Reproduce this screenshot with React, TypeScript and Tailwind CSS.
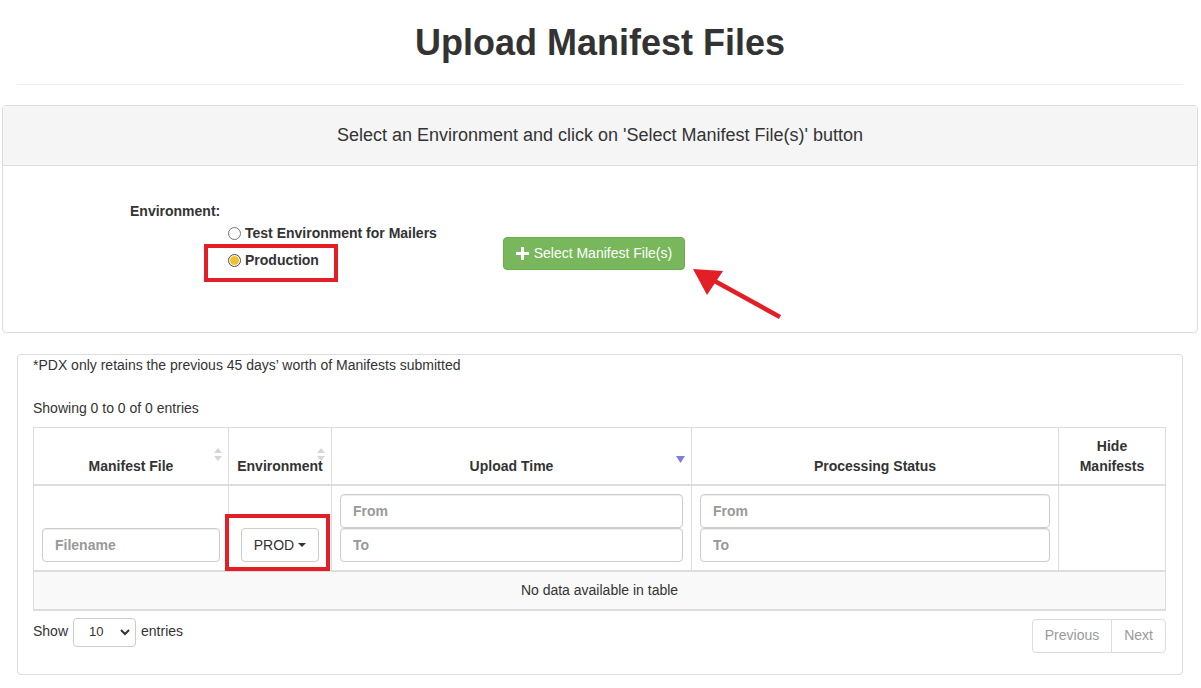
import React from 'react'

const font = { fontFamily: '"Liberation Sans", Arial, sans-serif' }

// small grey up/down sort indicator, like DataTables
function SortBoth() {
  return (
    <svg width="8" height="14" viewBox="0 0 8 14" className="absolute right-[6px] top-[20px]">
      <path d="M4 0 L8 5 L0 5 Z" fill="#d6d6d6" />
      <path d="M4 13 L8 8 L0 8 Z" fill="#d6d6d6" />
    </svg>
  )
}

function SortDesc() {
  return (
    <svg width="9" height="7" viewBox="0 0 9 7" className="absolute right-[6px] top-[28px]">
      <path d="M0 0 L9 0 L4.5 7 Z" fill="#7c7fd9" />
    </svg>
  )
}

function Radio({ checked }: { checked?: boolean }) {
  if (checked) {
    return (
      <span className="inline-flex w-[13px] h-[13px] rounded-full border-[1.5px] border-[#4a4a4a] items-center justify-center bg-white">
        <span className="w-[9px] h-[9px] rounded-full bg-[#f2c12e]" />
      </span>
    )
  }
  return <span className="inline-block w-[13px] h-[13px] rounded-full border border-[#767676] bg-white" />
}

function FilterInput({ placeholder }: { placeholder: string }) {
  return (
    <div className="h-[34px] w-full border border-[#ccc] rounded-[4px] bg-white px-3 flex items-center text-[14px] font-bold text-[#999] shadow-[inset_0_1px_1px_rgba(0,0,0,0.075)]">
      {placeholder}
    </div>
  )
}

export default function App() {
  return (
    <div className="bg-white min-h-[688px] text-[#333]" style={font}>
      {/* page title */}
      <div className="mx-[17px] w-[1166px] pt-[23px] pb-[21px] border-b border-[#eee]">
        <h1 className="text-center text-[36px] leading-[40px] font-bold text-[#333]">Upload Manifest Files</h1>
      </div>

      {/* environment panel */}
      <div className="mt-[20px] ml-[2px] w-[1196px] border border-[#ddd] rounded-[4px]">
        <div className="h-[60px] bg-[#f5f5f5] border-b border-[#ddd] flex items-center justify-center text-[18px] text-[#333]">
          Select an Environment and click on 'Select Manifest File(s)' button
        </div>
        <div className="relative h-[166px] pl-[127px] pt-[35px]">
          <div className="text-[14px] leading-[20px] font-bold">Environment:</div>
          <div className="flex">
            <div className="ml-[98px] mt-[2px] flex flex-col gap-[7px] text-[14px] leading-[20px] font-bold">
              <label className="flex items-center gap-[4px]">
                <Radio />
                <span>Test Environment for Mailers</span>
              </label>
              <label className="relative flex items-center gap-[4px]">
                <Radio checked />
                <span>Production</span>
                <span className="absolute left-[-24px] top-[-6px] w-[134px] h-[38px] border-[4px] border-[#e41e26]" />
              </label>
            </div>
            <div className="ml-[66px] mt-[16px]">
              <button className="h-[33px] w-[182px] rounded-[4px] bg-[#78b75b] border border-[#6aad4d] text-white text-[14px] flex items-center justify-center gap-[5px]">
                <svg width="13" height="13" viewBox="0 0 13 13">
                  <path d="M5 0 H8 V5 H13 V8 H8 V13 H5 V8 H0 V5 H5 Z" fill="#fff" />
                </svg>
                Select Manifest File(s)
              </button>
            </div>
          </div>
          {/* red arrow annotation */}
          <svg width="100" height="60" viewBox="0 0 100 60" className="absolute left-[686px] top-[99px]">
            <line x1="91" y1="52" x2="22" y2="14" stroke="#e41e26" strokeWidth="4.5" />
            <path d="M4 4 L34 6 L18 30 Z" fill="#e41e26" />
          </svg>
        </div>
      </div>

      {/* manifests panel */}
      <div className="mt-[21px] ml-[17px] w-[1166px] h-[321px] border border-[#ddd] rounded-[4px] px-[15px]">
        <div className="text-[14px] leading-[20px]">*PDX only retains the previous 45 days’ worth of Manifests submitted</div>
        <div className="mt-[23px] text-[14px] leading-[20px]">Showing 0 to 0 of 0 entries</div>

        <table className="mt-[9px] w-[1132px] border-collapse table-fixed text-[14px] leading-[20px]">
          <colgroup>
            <col className="w-[195px]" />
            <col className="w-[103px]" />
            <col className="w-[360px]" />
            <col className="w-[367px]" />
            <col className="w-[107px]" />
          </colgroup>
          <thead>
            <tr className="h-[57px]">
              <th className="relative border border-[#ddd] border-b-2 align-bottom pb-[8px] font-bold">
                Manifest File
                <SortBoth />
              </th>
              <th className="relative border border-[#ddd] border-b-2 align-bottom pb-[8px] font-bold">
                Environment
                <SortBoth />
              </th>
              <th className="relative border border-[#ddd] border-b-2 align-bottom pb-[8px] font-bold">
                Upload Time
                <SortDesc />
              </th>
              <th className="border border-[#ddd] border-b-2 align-bottom pb-[8px] font-bold">Processing Status</th>
              <th className="border border-[#ddd] border-b-2 align-bottom pb-[8px] font-bold">
                Hide
                <br />
                Manifests
              </th>
            </tr>
          </thead>
          <tbody>
            <tr>
              <td className="border border-[#ddd] border-b-2 align-bottom p-[8px]">
                <FilterInput placeholder="Filename" />
              </td>
              <td className="relative border border-[#ddd] border-b-2 align-bottom p-[8px]">
                <div className="mx-auto h-[34px] w-[78px] border border-[#ccc] rounded-[4px] flex items-center justify-center gap-[4px] text-[14px] text-[#333] bg-white">
                  PROD
                  <svg width="8" height="4" viewBox="0 0 8 4">
                    <path d="M0 0 L8 0 L4 4 Z" fill="#333" />
                  </svg>
                </div>
                <span className="absolute left-[-4px] top-[28px] w-[105px] h-[57px] border-[4px] border-[#e41e26]" />
              </td>
              <td className="border border-[#ddd] border-b-2 align-bottom p-[8px]">
                <FilterInput placeholder="From" />
                <FilterInput placeholder="To" />
              </td>
              <td className="border border-[#ddd] border-b-2 align-bottom p-[8px]">
                <FilterInput placeholder="From" />
                <FilterInput placeholder="To" />
              </td>
              <td className="border border-[#ddd] border-b-2" />
            </tr>
            <tr className="h-[39px] bg-[#f9f9f9]">
              <td colSpan={5} className="border border-[#ddd] border-b-2 text-center">
                No data available in table
              </td>
            </tr>
          </tbody>
        </table>

        <div className="mt-[7px] flex justify-between text-[14px]">
          <div className="flex items-start gap-[5px]">
            <span className="leading-[26px]">Show</span>
            <div className="h-[29px] w-[63px] border border-[#ccc] rounded-[4px] flex items-center justify-between pl-[15px] pr-[5px] text-[13px] text-[#333]">
              10
              <svg width="10" height="7" viewBox="0 0 10 7">
                <path d="M1 1 L5 5 L9 1" stroke="#333" strokeWidth="2" fill="none" />
              </svg>
            </div>
            <span className="leading-[26px]">entries</span>
          </div>
          <div className="flex h-[34px] mt-[1px] mr-[1px] border border-[#ddd] rounded-[4px] text-[#999] text-[14px]">
            <span className="px-[12px] flex items-center border-r border-[#ddd]">Previous</span>
            <span className="px-[12px] flex items-center">Next</span>
          </div>
        </div>
      </div>
    </div>
  )
}
